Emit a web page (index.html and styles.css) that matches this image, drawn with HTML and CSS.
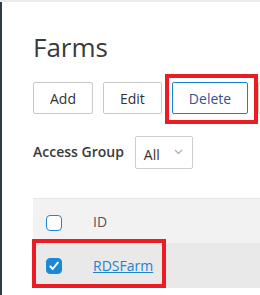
FILE: index.html
```html
<!DOCTYPE html>
<html lang="en">
<head>
  <meta charset="UTF-8">
  <meta name="viewport" content="width=device-width, initial-scale=1.0">
  <title>Farms</title>
  <link rel="stylesheet" href="styles.css">
</head>
<body>

  <div class="topbar"></div>

  <div class="shell">
    <main class="page">
      <h1 class="title">Farms</h1>

      <div class="toolbar">
        <button class="btn">Add</button>
        <button class="btn">Edit</button>
        <button class="btn btn-focus">Delete</button>
        <button class="btn btn-more" aria-label="More"></button>
      </div>

      <div class="filter">
        <span class="filter-label">Access Group</span>
        <div class="select">
          <span>All</span>
          <svg class="chevron" width="9" height="6" viewBox="0 0 9 6"><path d="M1 1l3.5 3.5L8 1" fill="none" stroke="#a8a8a8" stroke-width="1.1"/></svg>
        </div>
      </div>

      <div class="grid">
        <div class="grid-row grid-head">
          <div class="cell-check"><span class="checkbox"></span></div>
          <div class="cell-id">ID</div>
        </div>
        <div class="grid-row grid-selected">
          <div class="cell-check">
            <span class="checkbox checked">
              <svg width="12" height="12" viewBox="0 0 12 12"><path d="M2.3 6.4l2.4 2.6L9.8 2.6" fill="none" stroke="#fff" stroke-width="2" stroke-linecap="round" stroke-linejoin="round"/></svg>
            </span>
          </div>
          <div class="cell-id"><a href="#" class="link">RDSFarm</a></div>
        </div>
      </div>

      <!-- highlight boxes drawn over the screenshot -->
      <div class="mark mark-delete"></div>
      <div class="mark mark-row"></div>
    </main>
  </div>

</body>
</html>
```

FILE: styles.css
```css
html,
body {
  overflow: hidden;
}

body {
  margin: 0;
  font-family: 'Open Sans', 'Liberation Sans', sans-serif;
  color: #333;
  background-color: #fff;
  height: 295px;
}

.topbar {
  height: 2px;
  background-color: #ececec;
}

.shell {
  border-left: 2px solid #2f3c48;
  height: 293px;
  overflow: hidden;
}

.page {
  position: relative;
  padding: 27px 0 0 31px;
}

.title {
  margin: 0;
  font-size: 26px;
  font-weight: 400;
  line-height: 36px;
  color: #3a3a3a;
}

.toolbar {
  display: flex;
  gap: 10px;
  margin-top: 17px;
  overflow: hidden;
}

.btn {
  height: 32px;
  padding: 0 16px;
  border: 1px solid #c9c9c9;
  border-radius: 2px;
  background-color: #fff;
  font-family: inherit;
  font-size: 14px;
  color: #333;
  flex: none;
}

.btn-focus {
  border-color: #1a80cc;
  color: #3a4f8c;
}

.btn-more {
  width: 20px;
  padding: 0;
}

.filter {
  display: flex;
  align-items: flex-start;
  margin-top: 22px;
}

.filter-label {
  font-size: 14px;
  font-weight: 600;
  line-height: 20px;
  padding-top: 6px;
  margin-right: 11px;
  color: #3a3a3a;
}

.select {
  box-sizing: border-box;
  width: 58px;
  height: 33px;
  border: 1px solid #cdcdcd;
  border-radius: 2px;
  display: flex;
  align-items: center;
  justify-content: space-between;
  padding: 4px 9px 0 8px;
  font-size: 14px;
}

.chevron {
  margin-top: -6px;
}

.grid {
  margin-top: 29px;
  border-top: 1px solid #e4e4e4;
}

.grid-row {
  display: flex;
  align-items: center;
  height: 45px;
  font-size: 14px;
}

.grid-head {
  height: 44px;
  background-color: #f2f2f2;
  color: #555;
}

.grid-selected {
  background-color: #e9e9e9;
}

.cell-check {
  width: 60px;
  padding-left: 13px;
  box-sizing: border-box;
  display: flex;
}

.checkbox {
  box-sizing: border-box;
  width: 16px;
  height: 16px;
  border: 1.5px solid #1b88d6;
  border-radius: 4px;
  background-color: #fff;
  display: flex;
  align-items: center;
  justify-content: center;
}

.grid-head .checkbox {
  margin-top: 3px;
}

.checkbox.checked {
  background-color: #1b88d6;
}

.link {
  color: #1c83cf;
  text-decoration: underline;
}

.mark {
  position: absolute;
  box-sizing: border-box;
  border: 4px solid #ea1c24;
}

.mark-delete {
  left: 163px;
  top: 72px;
  width: 93px;
  height: 50px;
}

.mark-row {
  left: 30px;
  top: 237px;
  width: 134px;
  height: 49px;
}
```
